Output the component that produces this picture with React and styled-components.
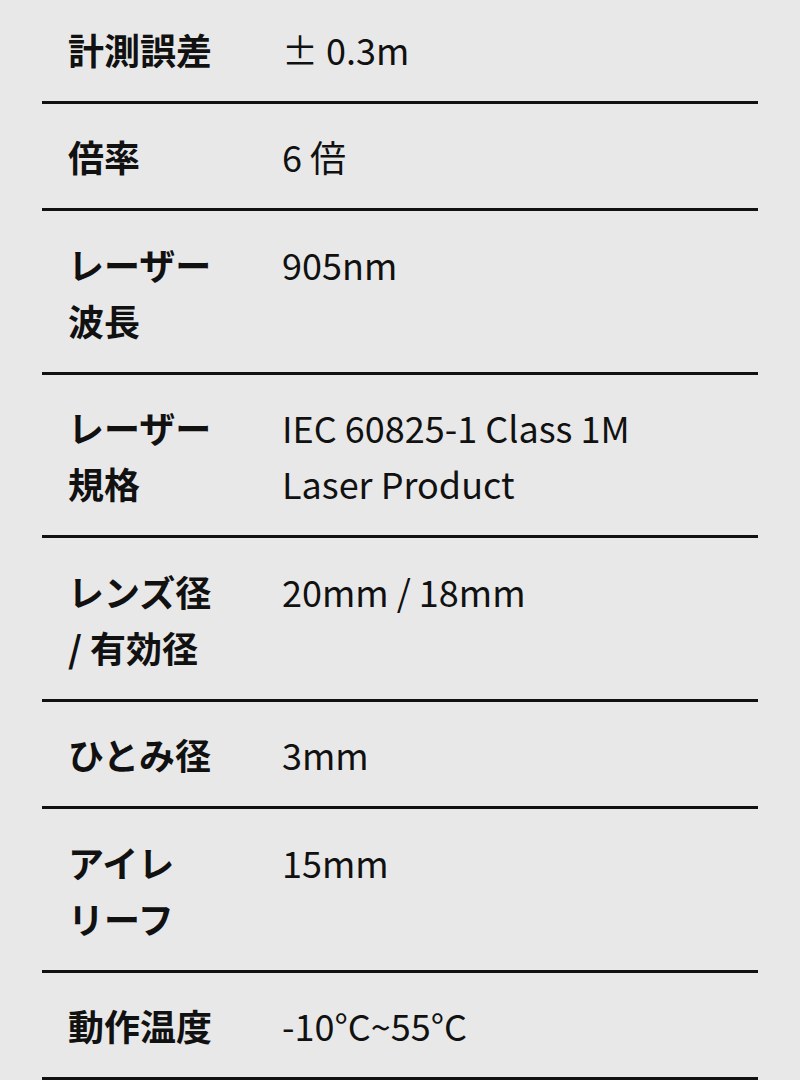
import React from 'react'
import styled, { createGlobalStyle } from 'styled-components'

const GlobalStyle = createGlobalStyle`
  html, body {
    margin: 0;
    padding: 0;
    background: #e8e8e8;
  }
  body {
    font-family: "Noto Sans CJK JP", "Noto Sans", sans-serif;
    color: #111;
    overflow: hidden;
  }
`

const SpecList = styled.dl`
  margin: -4px 42px 0;
  padding: 0;
`

const SpecRow = styled.div`
  display: grid;
  grid-template-columns: 150px 1fr;
  column-gap: 64px;
  padding: 24.5px 60px 24px 26px;
  border-bottom: 3px solid #111;
  font-size: 36px;
  line-height: 56px;
`

const Label = styled.dt`
  margin: 0;
  font-weight: 700;
`

const Value = styled.dd`
  margin: 0;
  font-weight: 400;
`

const specs = [
  [['計測誤差'], '± 0.3m'],
  [['倍率'], '6 倍'],
  [['レーザー', '波長'], '905nm'],
  [['レーザー', '規格'], 'IEC 60825-1 Class 1M Laser Product'],
  [['レンズ径', '/ 有効径'], '20mm / 18mm'],
  [['ひとみ径'], '3mm'],
  [['アイレ', 'リーフ'], '15mm'],
  [['動作温度'], '-10°C~55°C'],
]

const App = () => (
  <>
    <GlobalStyle />
    <SpecList>
      {specs.map(([lines, value]) => (
        <SpecRow key={lines.join('')}>
          <Label>
            {lines.map((line, i) => (
              <React.Fragment key={line}>
                {i > 0 && <br />}
                {line}
              </React.Fragment>
            ))}
          </Label>
          <Value>{value}</Value>
        </SpecRow>
      ))}
    </SpecList>
  </>
)

export default App
